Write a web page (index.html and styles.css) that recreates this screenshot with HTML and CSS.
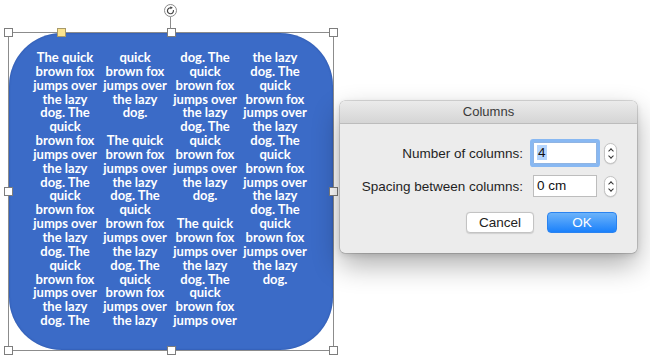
FILE: index.html
```html
<!DOCTYPE html>
<html>
<head>
<meta charset="utf-8">
<link rel="stylesheet" href="styles.css">
</head>
<body>
<div class="stage">
  <div class="frame">
    <div class="shape">
      <div class="cols">
        <div class="col">The quick<br>brown fox<br>jumps over<br>the lazy<br>dog. The<br>quick<br>brown fox<br>jumps over<br>the lazy<br>dog. The<br>quick<br>brown fox<br>jumps over<br>the lazy<br>dog. The<br>quick<br>brown fox<br>jumps over<br>the lazy<br>dog. The</div>
        <div class="col">quick<br>brown fox<br>jumps over<br>the lazy<br>dog.<br>&nbsp;<br>The quick<br>brown fox<br>jumps over<br>the lazy<br>dog. The<br>quick<br>brown fox<br>jumps over<br>the lazy<br>dog. The<br>quick<br>brown fox<br>jumps over<br>the lazy</div>
        <div class="col">dog. The<br>quick<br>brown fox<br>jumps over<br>the lazy<br>dog. The<br>quick<br>brown fox<br>jumps over<br>the lazy<br>dog.<br>&nbsp;<br>The quick<br>brown fox<br>jumps over<br>the lazy<br>dog. The<br>quick<br>brown fox<br>jumps over</div>
        <div class="col">the lazy<br>dog. The<br>quick<br>brown fox<br>jumps over<br>the lazy<br>dog. The<br>quick<br>brown fox<br>jumps over<br>the lazy<br>dog. The<br>quick<br>brown fox<br>jumps over<br>the lazy<br>dog.</div>
      </div>
    </div>
    <span class="handle h-tl"></span>
    <span class="handle h-tm"></span>
    <span class="handle h-tr"></span>
    <span class="handle h-ml"></span>
    <span class="handle h-mr"></span>
    <span class="handle h-bl"></span>
    <span class="handle h-bm"></span>
    <span class="handle h-br"></span>
    <span class="handle h-adj"></span>
    <span class="rot-line"></span>
    <span class="rot">
      <svg width="13" height="13" viewBox="0 0 13 13">
        <circle cx="6.5" cy="6.5" r="6" fill="#fff" stroke="#8a8a8a" stroke-width="1"/>
        <path d="M9.4 6.2 A3 3 0 1 1 6.9 3.8" fill="none" stroke="#444" stroke-width="1.2"/>
        <path d="M6.4 2.3 L8.9 3.8 L6.4 5.3 Z" fill="#444"/>
      </svg>
    </span>
  </div>

  <div class="dialog">
    <div class="titlebar">Columns</div>
    <div class="dbody">
      <div class="grid">
        <label class="lbl">Number of columns:</label>
        <div class="field focus"><span class="sel">4</span></div>
        <div class="stepper"><span class="up"></span><span class="down"></span></div>
        <label class="lbl">Spacing between columns:</label>
        <div class="field">0 cm</div>
        <div class="stepper"><span class="up"></span><span class="down"></span></div>
      </div>
      <div class="buttons">
        <button class="btn cancel">Cancel</button>
        <button class="btn ok">OK</button>
      </div>
    </div>
  </div>
</div>
</body>
</html>
```

FILE: styles.css
```css
html, body {
  margin: 0;
  padding: 0;
  background: #ffffff;
}

.stage {
  position: relative;
  width: 650px;
  height: 358px;
  padding: 32px 0 0 8px;
  box-sizing: border-box;
  overflow: hidden;
}

.frame {
  position: relative;
  width: 326px;
  height: 319px;
  box-sizing: border-box;
  border: 1px solid #8c8c8c;
}

.shape {
  position: absolute;
  inset: 0;
  background: #3b6bc7;
  border-radius: 53px;
  box-shadow: inset 0 0 2px rgba(20, 50, 120, 0.5);
}

.cols {
  display: grid;
  grid-template-columns: repeat(4, 70px);
  padding: 18px 0 0 21px;
}

.col {
  font-family: "Lato", "Open Sans", sans-serif;
  font-weight: 700;
  font-size: 13px;
  line-height: 13.85px;
  color: #ffffff;
  text-align: center;
  white-space: nowrap;
}

.handle {
  position: absolute;
  width: 9px;
  height: 9px;
  box-sizing: border-box;
  background: #ffffff;
  border: 1px solid #7d7d7d;
}

.h-tl { left: -5px; top: -5px; }
.h-tm { left: 158px; top: -5px; }
.h-tr { right: -5px; top: -5px; }
.h-ml { left: -5px; top: 154px; }
.h-mr { right: -5px; top: 154px; }
.h-bl { left: -5px; bottom: -5px; }
.h-bm { left: 158px; bottom: -5px; }
.h-br { right: -5px; bottom: -5px; }
.h-adj {
  left: 48px;
  top: -5px;
  background: #fbe38e;
  border-color: #a89a6a;
}

.rot-line {
  position: absolute;
  left: 161px;
  top: -16px;
  width: 1px;
  height: 12px;
  background: #8c8c8c;
}

.rot {
  position: absolute;
  left: 155px;
  top: -29px;
  width: 13px;
  height: 13px;
}

.rot svg { display: block; }

/* dialog */
.dialog {
  position: absolute;
  left: 340px;
  top: 101px;
  width: 297px;
  height: 152px;
  box-sizing: border-box;
  background: #ececec;
  border-radius: 5px;
  box-shadow: 0 0 0 0.5px rgba(0, 0, 0, 0.25), 0 12px 28px rgba(0, 0, 0, 0.32), 0 2px 6px rgba(0, 0, 0, 0.12);
  font-family: "Liberation Sans", Arial, sans-serif;
  color: #222;
  overflow: hidden;
}

.titlebar {
  height: 22px;
  line-height: 22px;
  text-align: center;
  font-size: 13px;
  color: #3a3a3a;
  background: linear-gradient(#ebebeb, #d5d5d5);
  border-bottom: 1px solid #bcbcbc;
}

.dbody {
  padding: 18px 20px 0 21px;
}

.grid {
  display: grid;
  grid-template-columns: 1fr 64px 20px;
  grid-auto-rows: 22px;
  row-gap: 11px;
  column-gap: 0;
  align-items: center;
}

.lbl {
  font-size: 13.5px;
  text-align: right;
  padding-right: 10px;
  color: #1f1f1f;
}

.field {
  height: 22px;
  box-sizing: border-box;
  background: #ffffff;
  border: 1px solid #bdbdbd;
  font-size: 13.5px;
  line-height: 20px;
  padding-left: 3px;
  color: #111;
}

.field.focus {
  border-color: #8fb4e3;
  box-shadow: 0 0 0 3px #88b8f2;
  border-radius: 1px;
}

.sel {
  background: #b4d5fe;
  padding: 0 1px;
}

.stepper {
  position: relative;
  margin-left: 7px;
  width: 13px;
  height: 21px;
  box-sizing: border-box;
  background: #ffffff;
  border: 1px solid #c4c4c4;
  border-radius: 7px;
  box-shadow: 0 0.5px 1px rgba(0, 0, 0, 0.15);
}

.stepper .up,
.stepper .down {
  position: absolute;
  left: 3.5px;
  width: 3px;
  height: 3px;
  border-left: 1.2px solid #333;
  border-top: 1.2px solid #333;
}

.stepper .up {
  top: 5px;
  transform: rotate(45deg);
}

.stepper .down {
  top: 10px;
  transform: rotate(225deg);
}

.buttons {
  display: flex;
  justify-content: flex-end;
  gap: 13px;
  margin-top: 15px;
}

.btn {
  height: 21px;
  box-sizing: border-box;
  border-radius: 4px;
  font-family: "Liberation Sans", Arial, sans-serif;
  font-size: 13.5px;
  line-height: 19px;
  padding: 0;
}

.cancel {
  width: 68px;
  background: #ffffff;
  border: 1px solid #c3c3c3;
  color: #222;
  box-shadow: 0 0.5px 1px rgba(0, 0, 0, 0.12);
}

.ok {
  width: 70px;
  background: linear-gradient(#6cb3fa, #1b81fb);
  border: 1px solid #2a83f0;
  color: #ffffff;
}
```
